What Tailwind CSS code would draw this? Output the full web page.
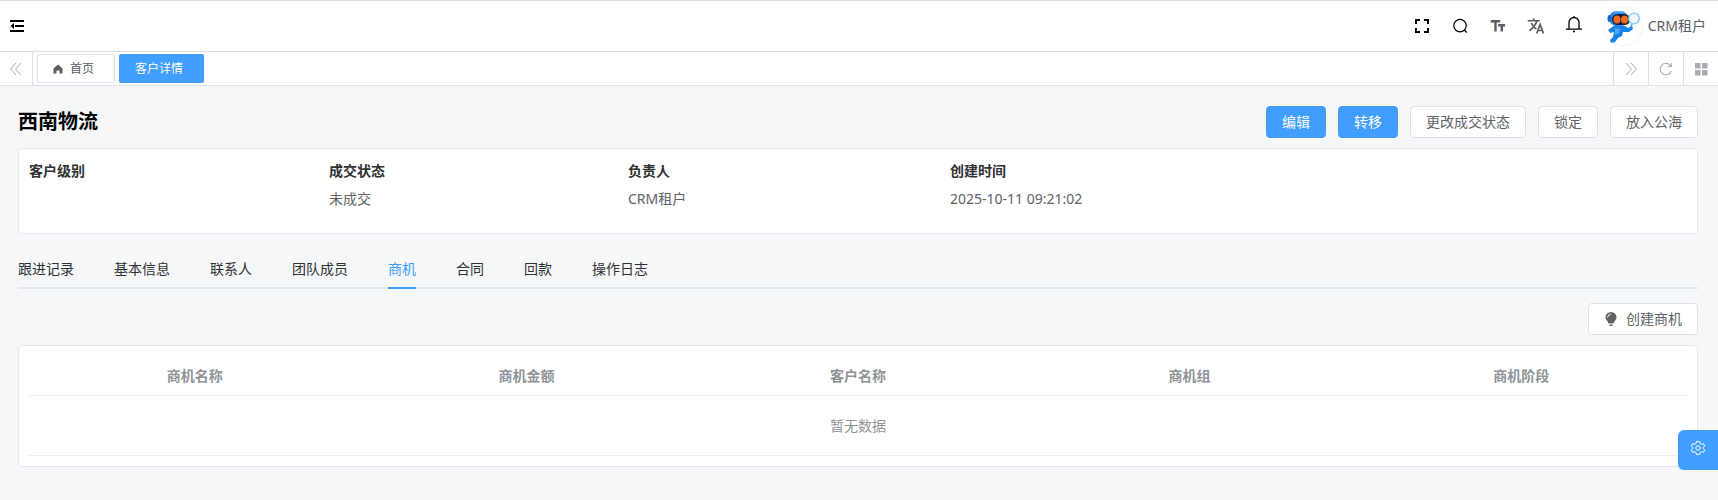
<!DOCTYPE html>
<html lang="zh-CN">
<head>
    <meta charset="UTF-8">
    <meta name="viewport" content="width=device-width, initial-scale=1.0">
    <title>客户详情</title>
    <script src="https://cdn.jsdelivr.net/npm/@tailwindcss/browser@4"></script>
</head>
<body class="min-h-screen bg-[#f5f7f9] font-['Noto_Sans','Noto_Sans_CJK_SC',sans-serif] text-sm leading-5 text-[#303133]">

    <!-- Top bar -->
    <header class="flex h-[52px] items-center justify-between border-y border-[#dcdfe6] bg-white pr-3 text-black">
        <button type="button" aria-label="折叠菜单" class="flex h-full items-center pl-[9px]">
            <svg class="size-4" viewBox="0 0 16 16" fill="currentColor"><path d="M1 2h14v2H1zM6 7h9v2H6zM1 12h14v2H1zM5 5v6L1.500 8z"/></svg>
        </button>
        <div class="flex items-center">
            <div class="mr-[14px] flex items-center gap-2">
                <button type="button" aria-label="全屏" class="flex w-[30px] justify-center">
                    <svg class="size-4" viewBox="0 0 16 16" fill="none" stroke="currentColor" stroke-width="2"><path d="M2 6V2h4M10 2h4v4M14 10v4h-4M6 14H2v-4"/></svg>
                </button>
                <button type="button" aria-label="搜索" class="flex w-[30px] justify-center">
                    <svg class="size-4" viewBox="0 0 16 16" fill="none" stroke="currentColor" stroke-width="1.200"><circle cx="8" cy="7.600" r="6.200"/><path d="M12.300 12l2.500 2.500"/></svg>
                </button>
                <button type="button" aria-label="字体大小" class="flex w-[30px] justify-center text-[#5a5e66]">
                    <svg class="size-4" viewBox="0 0 16 16" fill="none" stroke="currentColor" stroke-width="2.400"><path d="M.800 3.200h9.400M5.500 3.200v10.300M8.200 7.200h7M11.800 7.200v6.300"/></svg>
                </button>
                <button type="button" aria-label="语言" class="flex w-[30px] justify-center text-[#5a5e66]">
                    <svg class="size-[18px]" viewBox="0 0 24 24" fill="none" stroke="currentColor" stroke-width="2.300"><path d="M1 5h16M9 2v3M13.200 5C12 9.500 8 14.500 3.300 18.300M5.700 8c1.500 3.300 4 6 6.800 8.100M13 22l4.500-12L22 22M14.500 18h6"/></svg>
                </button>
                <button type="button" aria-label="通知" class="flex w-[30px] justify-center">
                    <svg class="mb-1 size-[18px]" viewBox="0 0 18 18" fill="none" stroke="currentColor" stroke-width="1.300"><path d="M9 1v1.500M4 14V7.500a5 5 0 0 1 10 0V14M1 14.200h16M8 16.500h2"/></svg>
                </button>
            </div>
            <a href="#" class="flex items-center gap-[5px] text-[#5a5e66]">
                <svg class="size-10" viewBox="0 0 40 40">
                    <circle cx="20" cy="20" r="19.500" fill="#fff" stroke="#ececec" stroke-dasharray="2 1"/>
                    <path d="M12 19l10 1 3 2 4-2 1 3-4 3-6 0-1 4-4 2-3 4-4 1-1-3 3-3 1-5-4 1-2-3z" fill="#1683e8"/>
                    <path d="M12 22l5 1-1 4-4 2z" fill="#4fa9f5"/>
                    <rect x="6" y="5" width="19" height="15" rx="7.500" fill="#2b8df0"/>
                    <ellipse cx="6.500" cy="12.500" rx="2" ry="3.500" fill="#1462c4"/>
                    <rect x="9" y="8" width="18" height="11" rx="5.500" fill="#14213f"/>
                    <ellipse cx="14" cy="13.500" rx="3.500" ry="4" fill="#f26a1b"/>
                    <ellipse cx="21.500" cy="13.500" rx="3.500" ry="4" fill="#f26a1b"/>
                    <circle cx="31" cy="12.500" r="5.200" fill="#f2faff" stroke="#8cccf7" stroke-width="1.500"/>
                    <path d="M29 18l-1 3" stroke="#4fa9f5" stroke-width="1.500"/>
                    <path d="M12 6.500c2-1 5-1 8 0" fill="none" stroke="#7cc4fb"/>
                </svg>
                <span>CRM租户</span>
            </a>
        </div>
    </header>

    <!-- Opened pages -->
    <nav class="flex h-[34px] items-stretch border-b border-[#dcdfe6] bg-white text-xs text-[#a8abb2]">
        <button type="button" aria-label="向左滚动" class="flex w-[33px] items-center justify-center border-r border-[#dcdfe6]">
            <svg class="size-3.5" viewBox="0 0 14 14" fill="none" stroke="currentColor"><path d="M7 1L1.500 7 7 13M12 1L6.500 7 12 13"/></svg>
        </button>
        <div class="flex flex-1 items-center gap-1 pl-1">
            <a href="#" class="flex h-[29px] items-center gap-1.5 rounded-xs border border-[#dcdfe6] pr-5 pl-[14px] text-[#5a5e66]">
                <svg class="size-3" viewBox="0 0 12 12" fill="#5a5e66"><path d="M6 1.500l4.500 4V10.500H7.500V7.500h-3v3h-3V5.500z"/></svg>
                首页
            </a>
            <a href="#" aria-current="page" class="flex h-[29px] items-center rounded-xs bg-[#409eff] pr-[21px] pl-4 text-white">客户详情</a>
        </div>
        <button type="button" aria-label="向右滚动" class="flex w-[35px] items-center justify-center border-l border-[#dcdfe6]">
            <svg class="size-3.5" viewBox="0 0 14 14" fill="none" stroke="currentColor"><path d="M2 1l5.500 6L2 13M7 1l5.500 6L7 13"/></svg>
        </button>
        <button type="button" aria-label="刷新" class="flex w-[35px] items-center justify-center border-l border-[#dcdfe6]">
            <svg class="size-3.5" viewBox="0 0 14 14" fill="none" stroke="currentColor" stroke-width="1.100"><path d="M12.300 9A5.700 5.700 0 1 1 11.800 4M12.500 1v3.500H9"/></svg>
        </button>
        <button type="button" aria-label="标签操作" class="flex w-[35px] items-center justify-center border-l border-[#dcdfe6]">
            <svg class="size-3.5" viewBox="0 0 14 14" fill="currentColor"><path d="M1 1h5.500v5.500H1zM8 1h5.500v5.500H8zM1 8h5.500v5.500H1zM8 8h5.500v5.500H8z"/></svg>
        </button>
    </nav>

    <main class="pt-5 pr-5 pl-[18px]">
        <div class="mb-[10px] flex h-8 items-center justify-between">
            <h1 class="text-xl font-bold text-black">西南物流</h1>
            <div class="flex gap-3 text-[#606266]">
                <button type="button" class="h-8 rounded border border-[#409eff] bg-[#409eff] px-[15px] text-white">编辑</button>
                <button type="button" class="h-8 rounded border border-[#409eff] bg-[#409eff] px-[15px] text-white">转移</button>
                <button type="button" class="h-8 rounded border border-[#dcdfe6] bg-white px-[15px]">更改成交状态</button>
                <button type="button" class="h-8 rounded border border-[#dcdfe6] bg-white px-[15px]">锁定</button>
                <button type="button" class="h-8 rounded border border-[#dcdfe6] bg-white px-[15px]">放入公海</button>
            </div>
        </div>

        <!-- Customer summary -->
        <dl class="grid min-h-[86px] grid-cols-[300fr_299fr_322fr_737fr] rounded border border-[#e4e7ed] bg-white px-[10px] pt-3">
            <div>
                <dt class="font-bold">客户级别</dt>
                <dd></dd>
            </div>
            <div>
                <dt class="font-bold">成交状态</dt>
                <dd class="mt-2 text-[#606266]">未成交</dd>
            </div>
            <div>
                <dt class="font-bold">负责人</dt>
                <dd class="mt-2 text-[#606266]">CRM租户</dd>
            </div>
            <div>
                <dt class="font-bold">创建时间</dt>
                <dd class="mt-2 text-[#606266]">2025-10-11 09:21:02</dd>
            </div>
        </dl>

        <!-- Tabs -->
        <div role="tablist" class="mt-[15px] mb-[14px] flex h-10 gap-10 shadow-[inset_0_-2px_0_#e4e7ed]">
            <button type="button" role="tab">跟进记录</button>
            <button type="button" role="tab">基本信息</button>
            <button type="button" role="tab">联系人</button>
            <button type="button" role="tab">团队成员</button>
            <button type="button" role="tab" aria-selected="true" class="text-[#409eff] shadow-[inset_0_-2px_0_#409eff]">商机</button>
            <button type="button" role="tab">合同</button>
            <button type="button" role="tab">回款</button>
            <button type="button" role="tab">操作日志</button>
        </div>

        <div class="mb-[10px] flex justify-end">
            <button type="button" class="flex h-8 items-center gap-2 rounded border border-[#dcdfe6] bg-white px-[15px] text-[#606266]">
                <svg class="size-3.5" viewBox="0 0 14 14" fill="#606266"><path d="M7 0a5.500 5.500 0 0 1 5.500 5.500C12.500 8 10 9 9.500 11.500h-5C4 9 1.500 8 1.500 5.500A5.500 5.500 0 0 1 7 0zM5.500 12.500h3V14h-3z"/><path d="M3.500 5.500Q4 2.500 7 2" fill="none" stroke="#fff"/></svg>
                创建商机
            </button>
        </div>

        <div class="rounded border border-[#e4e7ed] bg-white p-[10px]">
            <table class="w-full table-fixed border-separate border-spacing-0 text-center text-[#909399]">
                <thead>
                    <tr class="h-10">
                        <th class="border-b border-[#ebeef5] font-bold">商机名称</th>
                        <th class="border-b border-[#ebeef5] font-bold">商机金额</th>
                        <th class="border-b border-[#ebeef5] font-bold">客户名称</th>
                        <th class="border-b border-[#ebeef5] font-bold">商机组</th>
                        <th class="border-b border-[#ebeef5] font-bold">商机阶段</th>
                    </tr>
                </thead>
                <tbody>
                    <tr class="h-[60px]">
                        <td colspan="5" class="border-b border-[#ebeef5]">暂无数据</td>
                    </tr>
                </tbody>
            </table>
        </div>
    </main>

    <!-- Layout settings -->
    <button type="button" aria-label="设置" class="fixed right-0 bottom-[30px] flex h-10 w-10 justify-center rounded-l-md bg-[#409eff] pt-[11px] text-white">
        <svg class="size-3.5" viewBox="0 0 14 14" fill="none" stroke="currentColor" stroke-linejoin="round"><path d="M5.500.500h3l.500 2 1.300.700 2-.600 1.400 2.500-1.500 1.400v1l1.500 1.400-1.400 2.500-2-.600-1.300.700-.500 2h-3l-.500-2-1.300-.700-2 .600L.300 8.900l1.500-1.400v-1L.300 5.100l1.400-2.500 2 .600L5 2.500z"/><circle cx="7" cy="7" r="2.200"/></svg>
    </button>
</body>
</html>
